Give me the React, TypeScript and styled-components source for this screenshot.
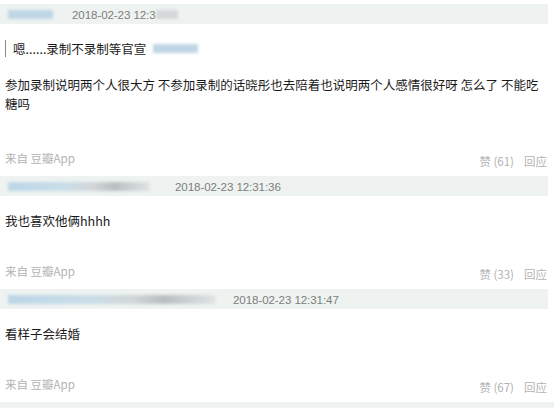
import { FC } from "react";
import styled, { createGlobalStyle } from "styled-components";

const GlobalStyle = createGlobalStyle`
  html, body { margin: 0; padding: 0; background: #fff; }
  body {
    font-family: "Liberation Sans", "Noto Sans CJK SC", sans-serif;
    overflow: hidden;
  }
`;

const Page = styled.div({
  width: 554,
  height: 408,
  paddingTop: 4,
  boxSizing: "border-box",
  overflow: "hidden",
});

const Comment = styled.div({
  width: 548,
});

const HeaderBar = styled.div({
  height: 20,
  background: "#eef3f1",
  display: "flex",
  alignItems: "center",
  paddingLeft: 8,
});

type IBlur = {
  w: number;
  tone?: "blue" | "grey" | "mixed";
};

const Blur = styled.span<IBlur>(({ w, tone = "blue" }) => ({
  display: "inline-block",
  width: w,
  height: 9,
  filter: "blur(1.5px)",
  background:
    tone === "grey"
      ? "#d4d8da"
      : tone === "mixed"
      ? "linear-gradient(90deg, #bcd6e6 0%, #c9dde8 40%, #d2d6d8 60%, #b9bec1 75%, #dfe3e4 100%)"
      : "#bfd6e4",
}));

type IDate = {
  offset: number;
};

const DateText = styled.span<IDate>(({ offset }) => ({
  marginLeft: offset,
  fontSize: 11.6,
  color: "#7e7e7e",
  letterSpacing: -0.1,
}));

const Quote = styled.div({
  display: "flex",
  alignItems: "center",
  marginTop: 16,
  marginLeft: 5,
  height: 17,
  borderLeft: "1.5px solid #888",
  paddingLeft: 7,
  fontFamily: '"Noto Sans CJK SC", sans-serif',
  fontSize: 12.5,
  color: "#1a1a1a",
});

const QuoteAuthor = styled(Blur)({
  marginLeft: 7,
});

type IBody = {
  top: number;
};

const Body = styled.div<IBody>(({ top }) => ({
  marginTop: top,
  paddingLeft: 5,
  width: 542,
  fontFamily: '"Noto Sans CJK SC", sans-serif',
  fontSize: 12.5,
  lineHeight: "19px",
  color: "#1a1a1a",
  wordBreak: "break-all",
}));

type IFooter = {
  top: number;
};

const Footer = styled.div<IFooter>(({ top }) => ({
  marginTop: top,
  height: 26,
  display: "flex",
  justifyContent: "space-between",
  alignItems: "flex-start",
  paddingLeft: 5,
  fontFamily: '"Noto Sans CJK SC", sans-serif',
  fontSize: 11.5,
  color: "#b3b3b3",
}));

const Source = styled.span({
  lineHeight: "16px",
});

const Actions = styled.span({
  marginTop: 3,
  lineHeight: "16px",
  display: "flex",
  gap: 10,
  paddingRight: 1,
});

const comments = [
  {
    blurW: 45,
    dateOffset: 19,
    date: "2018-02-23 12:3",
    tail: true,
    quote: true,
    text: "参加录制说明两个人很大方 不参加录制的话晓彤也去陪着也说明两个人感情很好呀 怎么了 不能吃糖吗",
    likes: 61,
  },
  {
    blurW: 142,
    dateOffset: 25,
    date: "2018-02-23 12:31:36",
    text: "我也喜欢他俩hhhh",
    likes: 33,
  },
  {
    blurW: 207,
    dateOffset: 18,
    date: "2018-02-23 12:31:47",
    text: "看样子会结婚",
    likes: 67,
  },
];

const App: FC = () => {
  return (
    <Page>
      <GlobalStyle />
      {comments.map((c, i) => (
        <Comment key={i}>
          <HeaderBar>
            <Blur w={c.blurW} tone={i === 0 ? "blue" : "mixed"} />
            <DateText offset={c.dateOffset}>{c.date}</DateText>
            {c.tail && <Blur w={22} tone="grey" />}
          </HeaderBar>
          {c.quote && (
            <Quote>
              嗯......录制不录制等官宣
              <QuoteAuthor w={45} />
            </Quote>
          )}
          <Body top={c.quote ? 18 : 15}>{c.text}</Body>
          <Footer top={c.quote ? 37 : 33}>
            <Source>来自 豆瓣App</Source>
            <Actions>
              <span>赞 ({c.likes})</span>
              <span>回应</span>
            </Actions>
          </Footer>
        </Comment>
      ))}
      <HeaderBar />
    </Page>
  );
};

export default App;
